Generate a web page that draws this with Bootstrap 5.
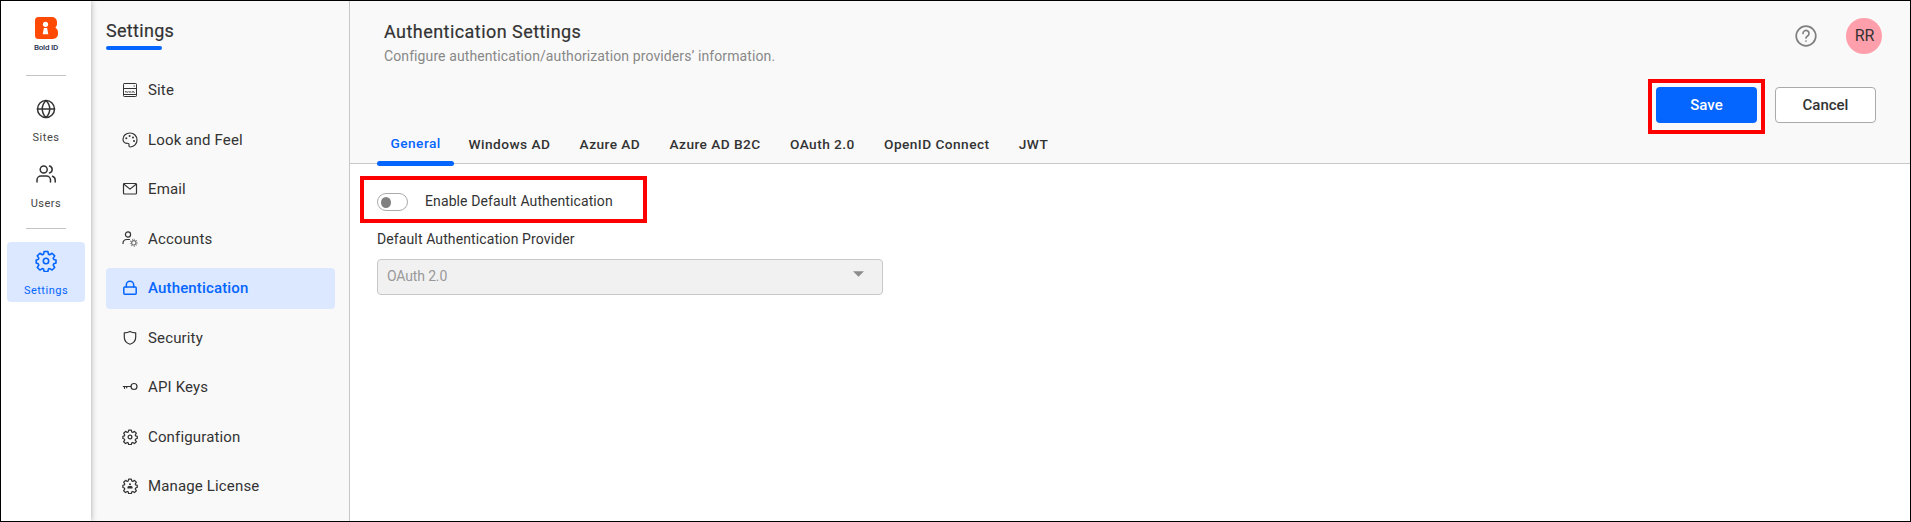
<!DOCTYPE html>
<html lang="en">
<head>
<meta charset="utf-8">
<meta name="viewport" content="width=device-width, initial-scale=1">
<title>Authentication Settings</title>
<link href="https://cdn.jsdelivr.net/npm/bootstrap@5.3.0/dist/css/bootstrap.min.css" rel="stylesheet">
<style>
body{font-family:Roboto,"Liberation Sans",sans-serif;color:#333;background:#fff}
.app-shell{height:522px;border:1px solid #000}
svg{display:block;fill:none;stroke:currentColor;stroke-linecap:round;stroke-linejoin:round}
svg.solid{stroke:none}
.rail{width:90px;padding-top:16px;box-shadow:0 0 6px rgba(0,0,0,.32);z-index:2}
.brand-mark{margin-left:1px}
.brand-name{font-size:8px;line-height:10px;letter-spacing:-.2px;font-weight:500;color:#1d2c4f;margin-top:4px;height:10px}
.rail-line{width:40px;height:1px;background:#c4c4c4}
.rail-item{width:78px;height:60px;font-size:11px;line-height:14px;letter-spacing:.5px;color:#444;border-radius:4px;padding-top:8px}
.rail-item svg{color:#333;margin-bottom:12px}
.rail-item svg.people{margin-bottom:13px}
.rail-item.active{background:#dbe8ff;color:#0565ff}
.rail-item.active svg{color:#0565ff}
.side{width:259px;background:#f9f9f9;border-right:1px solid #c8c8c8;padding:19px 14px 0 15px}
.side-title{font-size:18px;line-height:21px;letter-spacing:.3px;-webkit-text-stroke:.2px #333}
.title-bar{width:56px;height:4px;border-radius:2px;background:#0565ff;margin:5px 0 20px}
.side-nav{gap:8.5px}
.side-nav .nav-link{height:41px;padding:0 0 0 16px;gap:10px;font-size:15px;letter-spacing:.15px;color:#333;border-radius:4px}
.side-nav .nav-link svg{margin-bottom:1px}
.side-nav .nav-link.active{background:#dbe8ff;color:#0565ff;font-weight:500}
.top-area{height:163px;background:#f9f9f9;border-bottom:1px solid #c8c8c8}
.head-row{height:78px}
.page-head{padding:20px 0 0 34px}
.page-title{font-size:18px;line-height:22px;letter-spacing:.45px;-webkit-text-stroke:.2px #333}
.page-sub{font-size:14px;line-height:18px;letter-spacing:.1px;color:#888;margin-top:4px}
.user-area{gap:29px;padding:17px 28px 0 0}
.help{color:#808080;margin-top:7px}
.avatar{width:36px;height:36px;background:#ff9fab;font-size:16px;padding-left:1px}
.hl{border:4px solid #f00}
.action-row{height:48px;padding-right:34px;gap:10px}
.hl-save{padding:4px 4px 7px}
.act-btn{width:101px;height:36px;border-radius:4px;font-size:15px;font-weight:500;padding:0}
.btn-save{background:#0565ff;color:#fff}
.btn-cancel{background:#fff;border:1px solid #aaa;color:#333;margin-top:8px}
.tab-row{padding-left:27px;height:36px}
.tab-row .nav-link{font-size:13.7px;line-height:18px;font-weight:500;letter-spacing:.45px;color:#333;padding:8px 14.6px 0;height:36px}
.tab-row .nav-link.active{color:#0565ff;padding:7px 0 0 13.5px;width:77px}
.tab-mark{width:77px;height:5px;border-radius:3px;background:#0565ff;bottom:-3px;left:27px}
.hl-toggle{width:287px;height:47px;margin:12px 0 0 10px;padding-left:13px;gap:17px}
.switch{width:31px;height:18px;border:1px solid #aaa;border-radius:9px;padding:0 3px;margin-top:13px}
.knob{width:10px;height:11px;border-radius:50%;background:#808080}
.lbl{font-size:14px;line-height:18px;letter-spacing:.11px}
.hl-toggle .lbl{margin-top:12px}
.field{padding:7px 0 0 27px}
.field .lbl{margin-bottom:11px}
.pick{width:506px;height:36px;border:1px solid #c8c8c8;border-radius:4px;background:#f1f1f1;color:#999;font-size:14px;letter-spacing:-.15px;padding:0 18px 2px 9px}
.pick svg{margin-bottom:4px}
</style>
</head>
<body>
<div class="app-shell d-flex overflow-hidden">
  <nav class="rail bg-white d-flex flex-column align-items-center flex-shrink-0 position-relative">
    <svg class="brand-mark solid" width="23" height="22" viewBox="0 0 23 22"><path fill="#ff4a05" d="M3.500 0H17a5 5 0 0 1 5 5v2q0 2.500-1.700 3.500Q23 12 23 15v2a5 5 0 0 1-5 5H3.500A3.500 3.500 0 0 1 0 18.500v-15A3.500 3.500 0 0 1 3.500 0z"/><circle cx="10.500" cy="7.300" r="2.600" fill="#fff"/><path fill="#fff" d="M8.900 11h3.200l1.200 6.300H7.700z"/></svg>
    <div class="brand-name">Bold ID</div>
    <div class="rail-line" style="margin-top:22px"></div>
    <div class="rail-item d-flex flex-column align-items-center" style="margin-top:15px">
      <svg width="20" height="20" viewBox="0 0 20 20" stroke-width="1.500"><circle cx="10" cy="10" r="8.500"/><path d="M1.500 10h17M10 1.500c5 5 5 12 0 17M10 1.500c-5 5-5 12 0 17"/></svg>
      <span>Sites</span>
    </div>
    <div class="rail-item d-flex flex-column align-items-center" style="margin-top:5px">
      <svg class="people" width="20" height="20" viewBox="0 0 20 20" stroke-width="1.500"><circle cx="7.700" cy="5.500" r="3.500"/><path d="M1 18v-2a4 4 0 0 1 4-4h5.500a4 4 0 0 1 4 4v2M13.500 2.100a3.500 3.500 0 0 1 0 6.800M16.500 12.200a4 4 0 0 1 2.700 3.800v2"/></svg>
      <span>Users</span>
    </div>
    <div class="rail-line" style="margin-top:12px"></div>
    <div class="rail-item active d-flex flex-column align-items-center" style="margin-top:13px">
      <svg width="22" height="22" viewBox="0 0 22 22" stroke-width="1.600"><use href="#gear"/><circle cx="11" cy="11" r="2.700"/></svg>
      <span>Settings</span>
    </div>
  </nav>

  <aside class="side flex-shrink-0">
    <div class="side-title">Settings</div>
    <div class="title-bar"></div>
    <nav class="nav flex-column flex-nowrap side-nav">
      <a class="nav-link d-flex align-items-center" href="#"><svg width="16" height="16" viewBox="0 0 16 16" stroke-width="1"><rect x="1.500" y="1.500" width="13" height="13" rx=".8"/><path d="M1.500 6.500h13M12 4h.4M1.500 12.500h13"/><path stroke-width=".9" d="M3.500 9.500l.6.900.7-.9.700.900M6.900 9.500l.6.900.7-.9.700.900M10.300 9.500l.6.900.7-.9.700.900"/></svg>Site</a>
      <a class="nav-link d-flex align-items-center" href="#"><svg width="16" height="16" viewBox="0 0 16 16" stroke-width="1.200"><path d="M8 1C4 1 1 3.700 1 7.200c0 2.800 2 4.300 4 4.100 1.600-.2 2.200.5 2 1.700-.2 1.300.3 2 1.500 2C12 14.800 15 12 15 8c0-4-3-7-7-7z"/><g stroke-width="2"><path d="M4.300 6.200h.01M7.600 4h.01M11 5.400h.01M12 9h.01"/></g></svg>Look and Feel</a>
      <a class="nav-link d-flex align-items-center" href="#"><svg width="16" height="16" viewBox="0 0 16 16" stroke-width="1.200"><rect x="1.500" y="2.500" width="13" height="10.500" rx="1"/><path d="M2 3.200l6 4.900 6-4.900"/></svg>Email</a>
      <a class="nav-link d-flex align-items-center" href="#"><svg width="16" height="16" viewBox="0 0 16 16" stroke-width="1.200"><circle cx="6" cy="3.500" r="2.600"/><path d="M1 12.500c0-3 1.500-4 4-4h2.500"/><g stroke="#777"><circle cx="11.800" cy="11.800" r="2.200"/><path stroke-width="1.400" stroke-dasharray=".8 1.550" stroke-linecap="butt" d="M11.800 8.400a3.400 3.400 0 1 1-.01 0"/></g></svg>Accounts</a>
      <a class="nav-link active d-flex align-items-center" href="#"><svg width="16" height="16" viewBox="0 0 16 16" stroke-width="1.500"><rect x="1.800" y="7" width="12.400" height="7.200" rx="1"/><path d="M4.300 7V5a3.700 3.700 0 0 1 7.400 0v2"/></svg>Authentication</a>
      <a class="nav-link d-flex align-items-center" href="#"><svg width="16" height="16" viewBox="0 0 16 16" stroke-width="1.200"><path d="M8 1.400c1.700 1 3.700 1.400 5.700 1.400v4.400c0 3.700-2.300 5.900-5.700 7-3.400-1.100-5.700-3.300-5.700-7V2.800c2 0 4-.4 5.700-1.400z"/></svg>Security</a>
      <a class="nav-link d-flex align-items-center" href="#"><svg width="16" height="16" viewBox="0 0 16 16" stroke-width="1.200"><circle cx="12" cy="7.500" r="3"/><path d="M9 7.500H1.300M2.500 7.500v1.800M4.700 7.500v1.300"/></svg>API Keys</a>
      <a class="nav-link d-flex align-items-center" href="#"><svg width="16" height="16" viewBox="0 0 22 22" stroke-width="1.700"><path id="gear" d="M9.150 1.500h3.700l.6 2.700 1.300.55 2.350-1.500 2.600 2.600-1.500 2.350.55 1.300 2.250.5v3l-2.250.8-.55 1.300 1.500 2.350-2.600 2.600-2.350-1.500-1.300.55-.6 2.400h-3.700l-.6-2.400-1.300-.55-2.350 1.500-2.600-2.600 1.500-2.350-.55-1.300L1.200 13v-3l2.050-.5.55-1.300-1.500-2.350 2.600-2.600 2.350 1.500 1.300-.55z"/><circle cx="11" cy="11" r="2.600"/></svg>Configuration</a>
      <a class="nav-link d-flex align-items-center" href="#"><svg width="16" height="16" viewBox="0 0 22 22" stroke-width="1.700"><use href="#gear"/><circle cx="11" cy="8.500" r="1.400" fill="currentColor" stroke="none"/><path fill="currentColor" stroke="none" d="M7.500 14.500v-1.500q0-2 2-2h3q2 0 2 2v1.500z"/></svg>Manage License</a>
    </nav>
  </aside>

  <main class="flex-grow-1">
    <header class="top-area d-flex flex-column position-relative">
      <div class="head-row d-flex justify-content-between">
        <div class="page-head">
          <div class="page-title">Authentication Settings</div>
          <div class="page-sub">Configure authentication/authorization providers’ information.</div>
        </div>
        <div class="user-area d-flex align-items-start">
          <svg class="help" width="22" height="22" viewBox="0 0 22 22" stroke-width="1.700"><circle cx="11" cy="11" r="9.800"/><path d="M8 8.500a3 3 0 1 1 4.600 2.500c-1 .7-1.600 1-1.600 2M11 16h.01"/></svg>
          <div class="avatar rounded-circle d-flex align-items-center justify-content-center">RR</div>
        </div>
      </div>
      <div class="action-row d-flex justify-content-end align-items-start">
        <div class="hl hl-save"><button type="button" class="btn act-btn btn-save d-block">Save</button></div>
        <button type="button" class="btn act-btn btn-cancel">Cancel</button>
      </div>
      <nav class="nav flex-nowrap tab-row">
        <a class="nav-link active" href="#">General</a>
        <a class="nav-link" href="#">Windows AD</a>
        <a class="nav-link" href="#">Azure AD</a>
        <a class="nav-link" href="#">Azure AD B2C</a>
        <a class="nav-link" href="#">OAuth 2.0</a>
        <a class="nav-link" href="#">OpenID Connect</a>
        <a class="nav-link" href="#">JWT</a>
      </nav>
      <div class="tab-mark position-absolute"></div>
    </header>
    <div class="hl hl-toggle d-flex align-items-start">
      <div class="switch d-flex align-items-center"><div class="knob"></div></div>
      <label class="lbl">Enable Default Authentication</label>
    </div>
    <div class="field">
      <div class="lbl">Default Authentication Provider</div>
      <div class="pick d-flex align-items-center justify-content-between"><span>OAuth 2.0</span><svg class="solid" width="11" height="6" viewBox="0 0 11 6"><path fill="#8c8c8c" d="M0 .3h11L5.500 5.800z"/></svg></div>
    </div>
  </main>
</div>
<script src="https://cdn.jsdelivr.net/npm/bootstrap@5.3.0/dist/js/bootstrap.bundle.min.js"></script>
</body>
</html>
